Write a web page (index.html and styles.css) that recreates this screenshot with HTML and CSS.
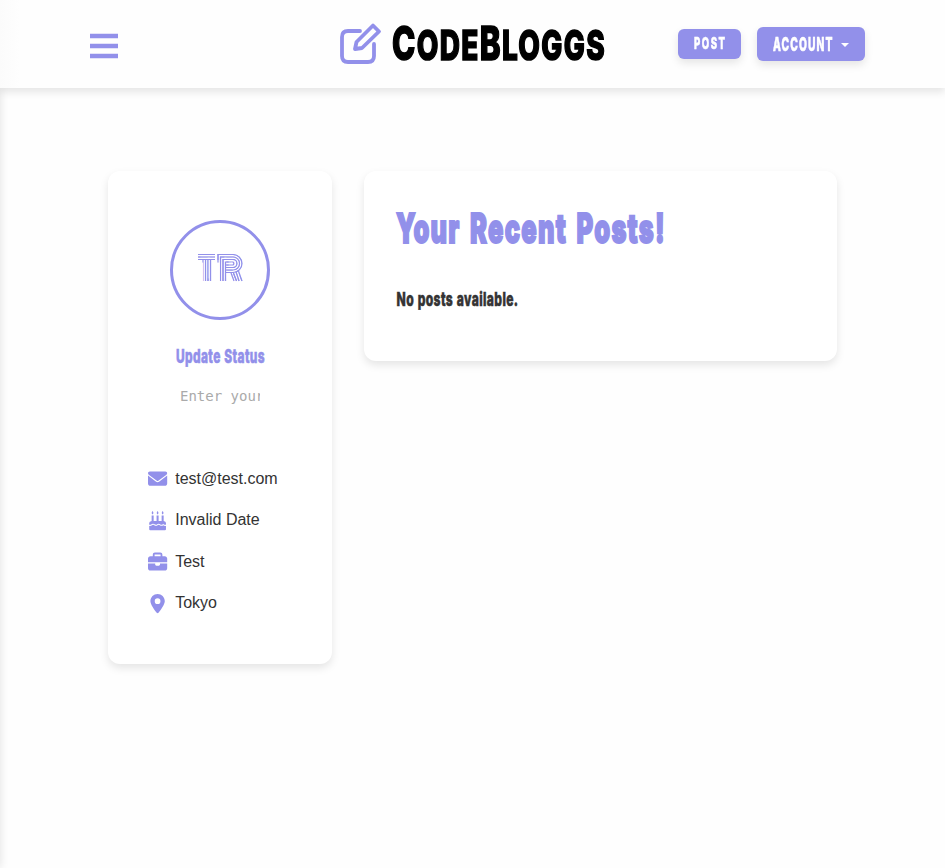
FILE: index.html
```html
<!DOCTYPE html>
<html lang="en">
<head>
<meta charset="utf-8">
<title>CodeBloggs</title>
<link rel="stylesheet" href="styles.css">
</head>
<body>
<div class="drawer-edge"></div>
<header class="navbar">
  <button class="menu" aria-label="Menu"><svg width="28" height="26"><path d="M0 3H28M0 13H28M0 23H28"/></svg></button>
  <svg class="logo" width="266" height="44" viewBox="339 22 266 44">
    <g fill="none" stroke="#9290ea" stroke-width="3.8" stroke-linejoin="round" stroke-linecap="round">
      <path d="M360 31H348Q342 31 342 37V56Q342 62 348 62H368Q374 62 374 56V44"/>
      <path d="M355 49L356.500 42L373 25.500L379 31.500L362 48Z"/>
    </g>
    <text class="wordmark" x="392" y="59.500" textLength="214" lengthAdjust="spacingAndGlyphs"><tspan class="big">C</tspan>ODE<tspan class="big">B</tspan>LOGGS</text>
  </svg>
  <div class="actions">
    <button class="btn post"><svg width="32" height="20"><text x="0" y="15" textLength="32.500" lengthAdjust="spacingAndGlyphs">POST</text></svg></button>
    <button class="btn account"><svg width="60" height="22"><text x="0" y="17.500" textLength="60.500" lengthAdjust="spacingAndGlyphs">ACCOUNT</text></svg><i class="caret"></i></button>
  </div>
</header>
<main class="content">
  <aside class="card profile">
    <div class="avatar">
      <svg width="48" height="30" viewBox="196 252 48 30">
        <defs>
          <pattern id="lines" patternUnits="userSpaceOnUse" x="196" y="252" width="48" height="30" viewBox="196 252 48 30">
            <g fill="none" stroke="#9290ea" stroke-width="1.200">
              <path d="M198 254.500H215M198 257H215M198 259.500H215M203 260V281M205.500 260V281M208 260V281M210.500 260V281"/>
              <path d="M218 281V254.500H233A9 9 0 0 1 233 272.500H226M220.500 281V257H233A6.500 6.500 0 0 1 233 270H226M223 281V259.500H233A4 4 0 0 1 233 267.500H226M225.500 281V262H233A1.800 1.800 0 0 1 233 265H226M231 273L234 281M233.500 273L236.500 281M236 272L239 281M238.500 271L242 281"/>
            </g>
          </pattern>
        </defs>
        <g class="initials"><text x="197" y="281" textLength="46" lengthAdjust="spacingAndGlyphs">TR</text></g>
      </svg>
    </div>
    <h2><svg width="90" height="24"><text x="1" y="18" textLength="89" lengthAdjust="spacingAndGlyphs">Update Status</text></svg></h2>
    <input class="status" placeholder="Enter your status">
    <ul class="details">
      <li><svg viewBox="0 0 512 512"><path d="M48 64C21.500 64 0 85.500 0 112c0 15.100 7.100 29.300 19.200 38.400L236.800 313.600c11.400 8.500 27 8.500 38.400 0L492.800 150.400c12.100-9.100 19.200-23.300 19.200-38.400 0-26.500-21.500-48-48-48H48zM0 176V384c0 35.300 28.700 64 64 64H448c35.300 0 64-28.700 64-64V176L294.400 339.200c-22.800 17.100-54 17.100-76.800 0L0 176z"/></svg>test@test.com</li>
      <li><svg viewBox="0 0 19 19">
        <path d="M4.500 0Q6.200 2.300 4.500 3.400Q2.800 2.300 4.500 0M9.500 0Q11.200 2.300 9.500 3.400Q7.800 2.300 9.500 0M14.500 0Q16.200 2.300 14.500 3.400Q12.800 2.300 14.500 0M3.600 4.500H5.600V10H8.500V4.500H10.500V10H13.500V4.500H15.500V10Q17.800 10.300 17.800 12V18Q17.800 19 16.800 19H2.200Q1.200 19 1.200 18V12Q1.200 10.300 3.600 10Z"/>
        <path class="icing" d="M1 14.200Q2.800 14.400 4 13.400Q5.200 12.600 6.400 13.600Q8 14.800 9.500 13.400Q10.500 12.600 12 13.700Q13.500 14.800 15 13.400Q16.200 14.400 18 14.200"/>
      </svg>Invalid Date</li>
      <li><svg viewBox="0 0 512 512"><path d="M184 48H328c4.400 0 8 3.600 8 8V96H176V56c0-4.400 3.600-8 8-8zm-56 8V96H64C28.700 96 0 124.700 0 160v96H512V160c0-35.300-28.700-64-64-64H384V56c0-30.900-25.100-56-56-56H184c-30.900 0-56 25.100-56 56zM512 288H320v32c0 17.700-14.300 32-32 32H224c-17.700 0-32-14.300-32-32V288H0V416c0 35.300 28.700 64 64 64H448c35.300 0 64-28.700 64-64V288z" transform="translate(0 16)"/></svg>Test</li>
      <li><svg viewBox="0 0 384 512"><path fill-rule="evenodd" d="M215.700 499.200C267 435 384 279.400 384 192 384 86 298 0 192 0S0 86 0 192c0 87.400 117 243 168.300 307.200 12.300 15.300 35.100 15.300 47.400 0zM192 116a76 76 0 1 1 0 152 76 76 0 1 1 0-152z"/></svg>Tokyo</li>
    </ul>
  </aside>
  <section class="card posts">
    <h1><svg width="270" height="40"><text x="0" y="35" textLength="270" lengthAdjust="spacingAndGlyphs">Your Recent Posts!</text></svg></h1>
    <p><svg width="124" height="24"><text x="0.500" y="18" textLength="122" lengthAdjust="spacingAndGlyphs">No posts available.</text></svg></p>
  </section>
</main>
</body>
</html>
```
FILE: styles.css
```css
* { box-sizing: border-box; }
body {
  margin: 0;
  min-height: 868px;
  background: #fefefe;
  color: #333;
  font: 16px/24px "Liberation Sans", Arial, sans-serif;
  overflow: hidden;
}
svg { display: block; overflow: visible; }
button { border: 0; padding: 0; }
h1, h2, p, ul { margin: 0; padding: 0; }

.drawer-edge {
  position: fixed;
  top: 0;
  bottom: 0;
  left: -10px;
  width: 10px;
  box-shadow: 0 0 10px rgba(0, 0, 0, .12);
}
.navbar {
  position: relative;
  height: 88px;
  padding: 0 80px 0 90px;
  display: grid;
  grid-template-columns: 249px 266px 1fr;
  align-items: center;
  background: linear-gradient(90deg, #fbfbfb, #fefefe 20px);
  box-shadow: 0 4px 8px rgba(0, 0, 0, .1);
}
.menu {
  width: 28px;
  margin-top: 4px;
  background: none;
}
.menu path { stroke: #9290ea; stroke-width: 4.600px; }
.wordmark {
  font: 800 41px Inter, sans-serif;
  letter-spacing: 2px;
  fill: #000;
  stroke: #000;
  stroke-width: 1.600px;
}
.wordmark .big { font-size: 46px; }
.actions { display: flex; justify-content: flex-end; align-items: center; gap: 16px; }
.btn {
  display: flex;
  align-items: center;
  border-radius: 6px;
  background: #9290ea;
  box-shadow: 0 4px 8px rgba(0, 0, 0, .1);
}
.btn text {
  fill: #fff;
  stroke: #fff;
  stroke-width: .6px;
  font: 800 16px Inter, sans-serif;
  letter-spacing: 2.500px;
}
.post { width: 63px; height: 30px; padding-left: 16px; }
.account { width: 108px; height: 34px; padding-left: 16px; gap: 8px; }
.account text { font-size: 19px; letter-spacing: 2px; }
.caret {
  border: 4px solid transparent;
  border-top-color: #fff;
  border-bottom: 0;
  margin-top: 2px;
}

.content {
  display: grid;
  grid-template-columns: 224px 473px;
  gap: 32px;
  align-items: start;
  padding: 83px 108px 0;
}
.card { background: #fff; border-radius: 12px; box-shadow: 0 4px 8px rgba(0, 0, 0, .1); }
.profile {
  height: 493px;
  padding-top: 49px;
  display: flex;
  flex-direction: column;
  align-items: center;
}
.avatar {
  width: 100px;
  height: 100px;
  border: 3px solid #9290ea;
  border-radius: 50%;
  display: grid;
  place-items: center;
  padding-bottom: 6px;
}
.initials {
  font: 900 37.500px Inter, sans-serif;
  fill: url(#lines);
  stroke: url(#lines);
  stroke-width: 5px;
}
.profile h2 { height: 24px; margin-top: 25px; }
.profile h2 text {
  font: 800 19px Inter, sans-serif;
  letter-spacing: .6px;
  word-spacing: 1px;
  fill: #9290ea;
  stroke: #9290ea;
  stroke-width: .6px;
}
.status {
  width: 80px;
  height: 22px;
  margin-top: 16px;
  padding: 0;
  border: 0;
  background: none;
  font: 14px "DejaVu Sans Mono", monospace;
}
.status::placeholder { color: #aaa; opacity: 1; }
.details { list-style: none; align-self: stretch; margin-top: 60px; padding-left: 40px; }
.details li { display: flex; align-items: center; gap: 8px; height: 24px; margin-bottom: 17.400px; }
.details svg { width: 19.200px; height: 19.200px; fill: #9290ea; }
.details .icing { fill: none; stroke: #fff; stroke-width: 1px; }

.posts { height: 190px; padding: 37px 32px 0; }
.posts h1 { height: 40px; }
.posts h1 text {
  font: 900 40.500px Inter, sans-serif;
  letter-spacing: 2px;
  word-spacing: 5px;
  fill: #9290ea;
  stroke: #9290ea;
  stroke-width: 1.800px;
}
.posts p { margin-top: 40px; }
.posts p text {
  font: 800 19px Inter, sans-serif;
  letter-spacing: .6px;
  word-spacing: 1px;
  fill: #333;
  stroke: #333;
  stroke-width: .6px;
}
```
